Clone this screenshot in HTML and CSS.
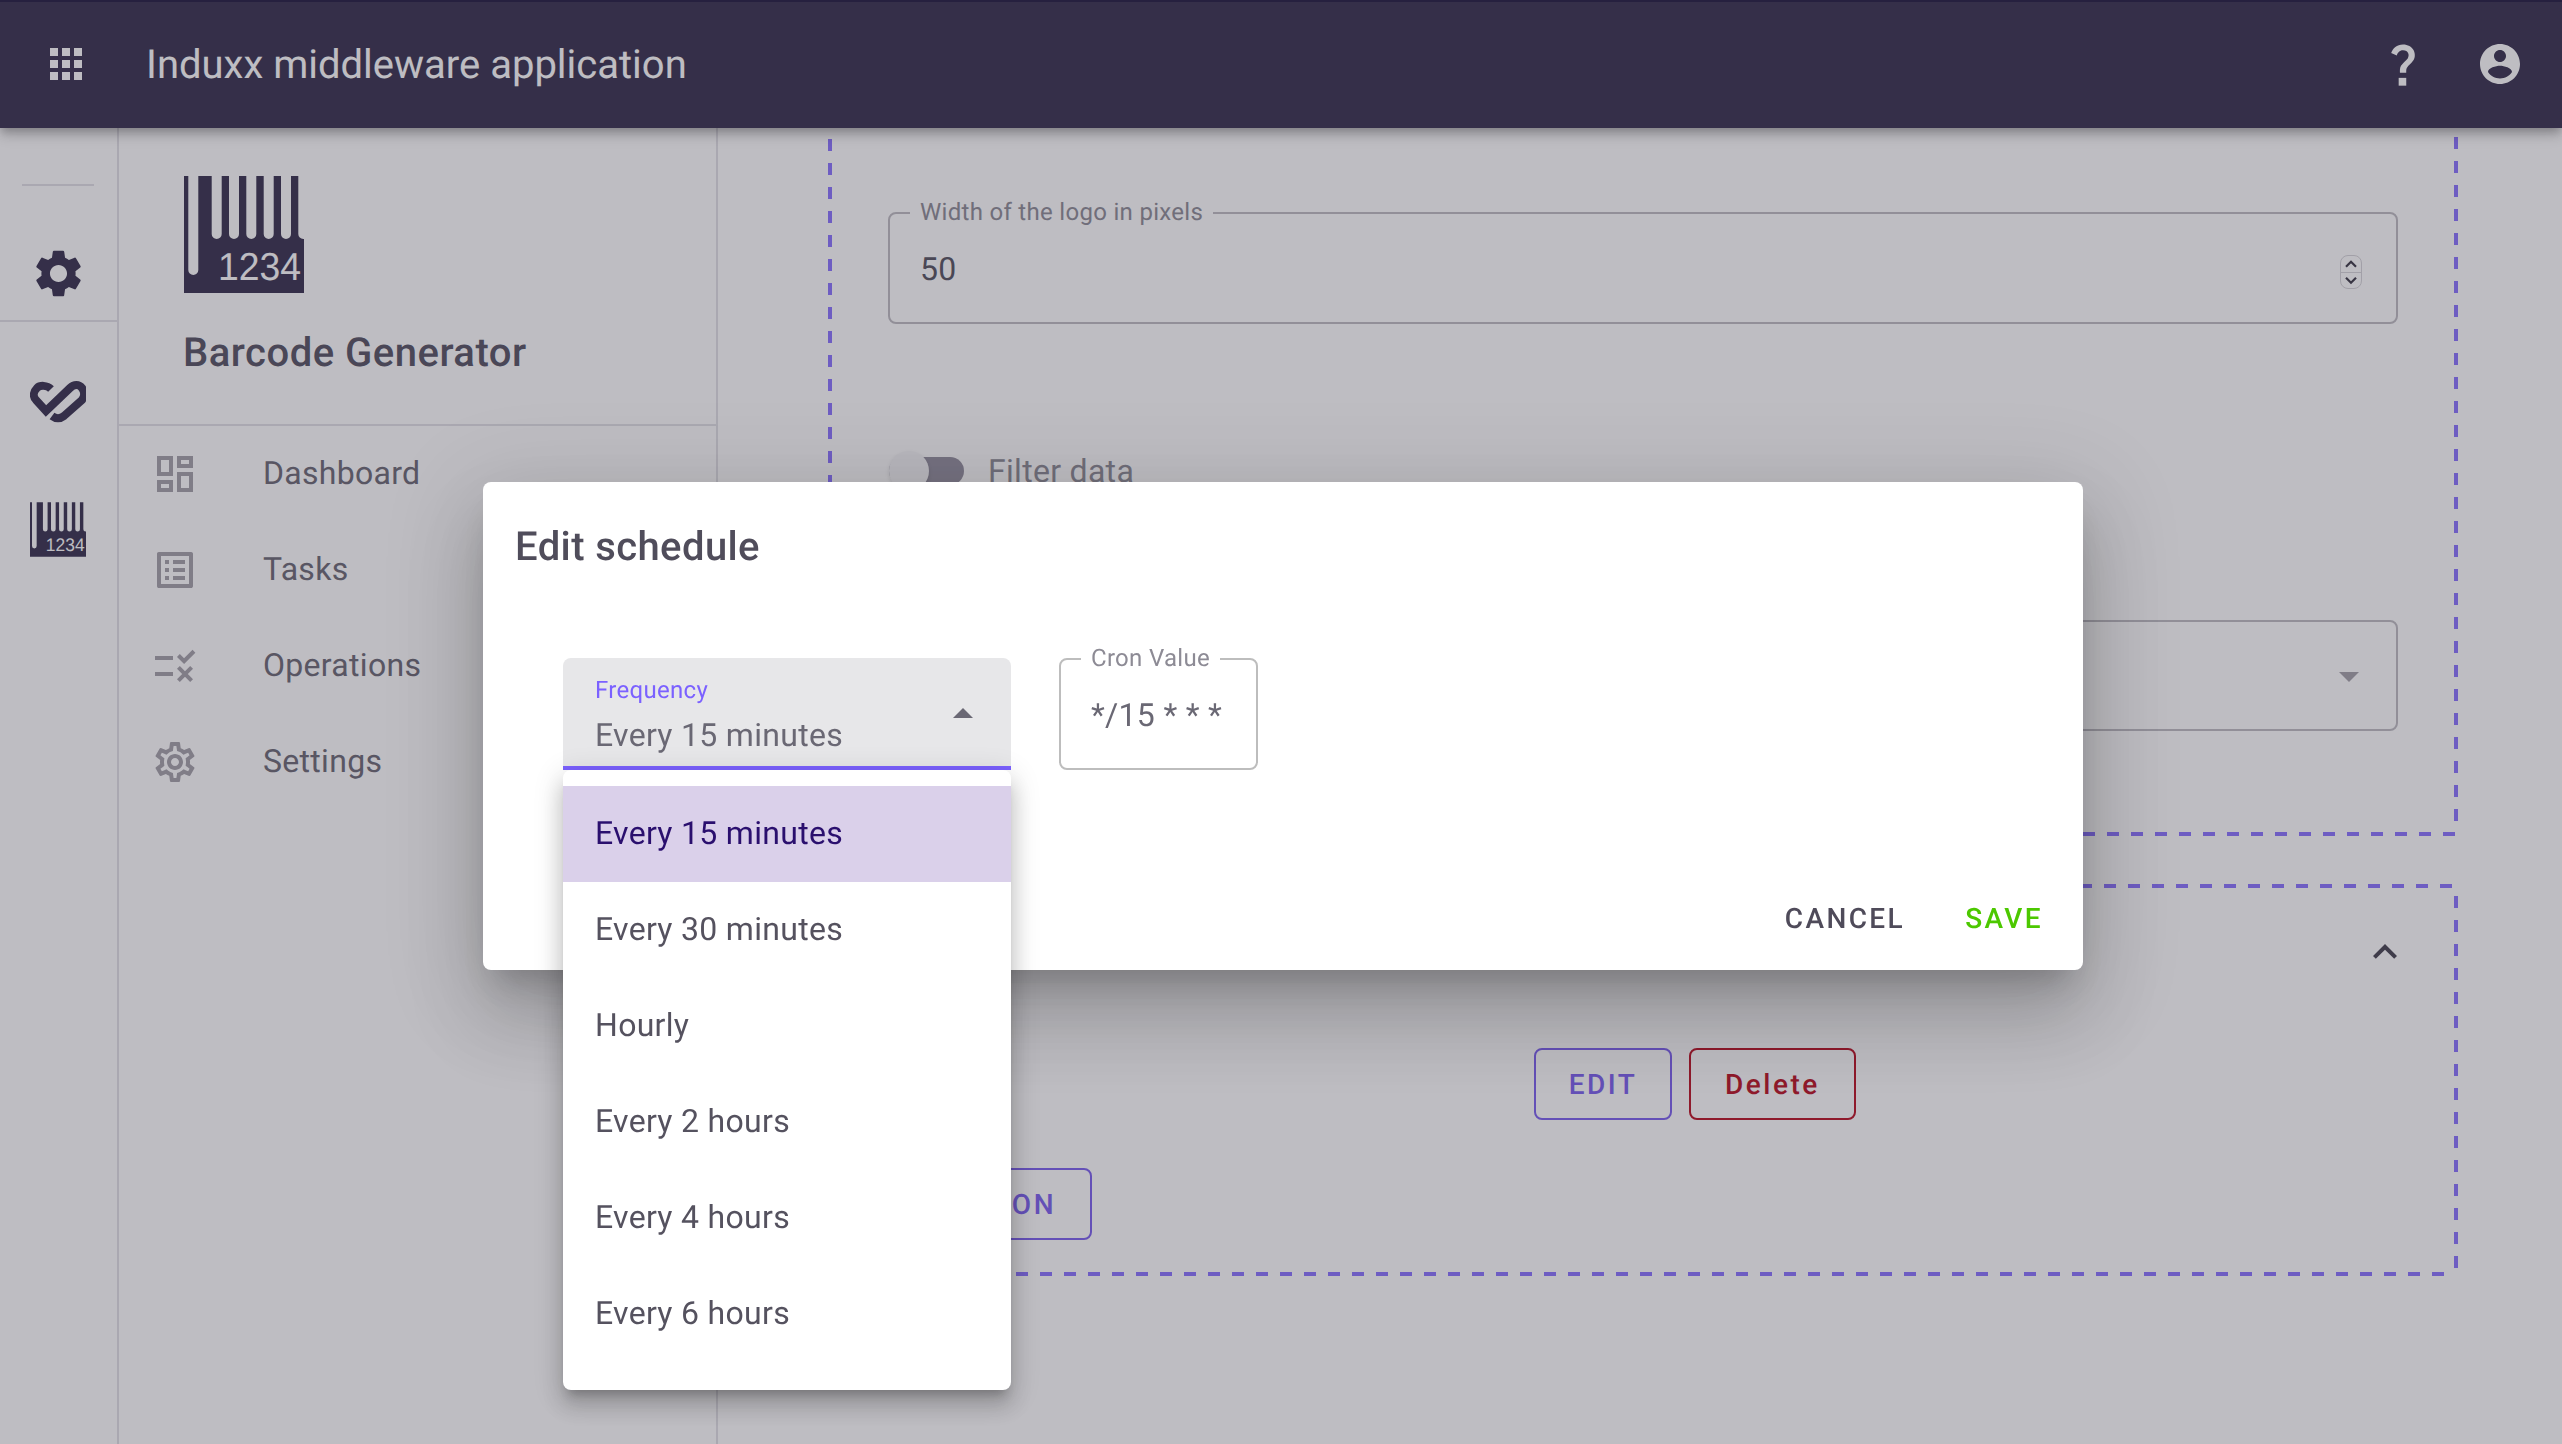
FILE: index.html
```html
<!DOCTYPE html>
<html lang="en">
<head>
<meta charset="utf-8">
<title>Induxx middleware application</title>
<link rel="stylesheet" href="styles.css">
</head>
<body>
<div class="app">
  <header class="appbar">
    <svg class="icon-48" viewBox="0 0 24 24"><path d="M4 8h4V4H4v4zm6 12h4v-4h-4v4zm-6 0h4v-4H4v4zm0-6h4v-4H4v4zm6 0h4v-4h-4v4zm6-10v4h4V4h-4zm-6 4h4V4h-4v4zm6 6h4v-4h-4v4zm0 6h4v-4h-4v4z"/></svg>
    <div class="app-title">Induxx middleware application</div>
    <svg class="icon-help" viewBox="0 0 24 24"><path d="M11.07 12.85c.77-1.39 2.25-2.21 3.11-3.44.91-1.29.4-3.7-2.18-3.7-1.69 0-2.52 1.28-2.87 2.34L6.54 6.96C7.25 4.83 9.18 3 11.99 3c2.35 0 3.96 1.07 4.78 2.41.7 1.15 1.11 3.3.03 4.9-1.2 1.77-2.35 2.31-2.97 3.45-.25.46-.35.76-.35 2.24h-2.89c-.01-.78-.13-2.05.48-3.15z"/><path d="M10 18.4h3.5V22H10z"/></svg>
    <svg class="icon-48 icon-account" viewBox="0 0 24 24"><path d="M12 2C6.48 2 2 6.48 2 12s4.48 10 10 10 10-4.48 10-10S17.52 2 12 2zm0 3c1.66 0 3 1.34 3 3s-1.34 3-3 3-3-1.34-3-3 1.34-3 3-3zm0 14.2c-2.5 0-4.71-1.28-6-3.22.03-1.99 4-3.08 6-3.08 1.99 0 5.97 1.09 6 3.08-1.29 1.94-3.5 3.22-6 3.22z"/></svg>
  </header>
  <div class="workspace">
    <nav class="rail">
      <div class="rail-rule-short"></div>
      <svg class="rail-gear" viewBox="0 0 24 24"><path d="M19.14 12.94c.04-.3.06-.61.06-.94 0-.32-.02-.64-.07-.94l2.03-1.58c.18-.14.23-.41.12-.61l-1.92-3.32c-.12-.22-.37-.29-.59-.22l-2.39.96c-.5-.38-1.03-.7-1.62-.94l-.36-2.54c-.04-.24-.24-.41-.48-.41h-3.84c-.24 0-.43.17-.47.41l-.36 2.54c-.59.24-1.13.57-1.62.94l-2.39-.96c-.22-.08-.47 0-.59.22L2.74 8.87c-.12.21-.08.47.12.61l2.03 1.58c-.05.3-.09.63-.09.94s.02.64.07.94l-2.03 1.58c-.18.14-.23.41-.12.61l1.92 3.32c.12.22.37.29.59.22l2.39-.96c.5.38 1.03.7 1.62.94l.36 2.54c.05.24.24.41.48.41h3.84c.24 0 .44-.17.47-.41l.36-2.54c.59-.24 1.13-.56 1.62-.94l2.39.96c.22.08.47 0 .59-.22l1.92-3.32c.12-.22.07-.47-.12-.61l-2.01-1.58zM12 15.6c-1.98 0-3.6-1.62-3.6-3.6s1.62-3.6 3.6-3.6 3.6 1.62 3.6 3.6-1.62 3.6-3.6 3.6z"/></svg>
      <div class="rail-rule"></div>
      <svg class="rail-heart" viewBox="10 22 56 42"><path d="M31 30C27 26 20 26 17 29C13 33 13 38 16 41L26 52L50 29C54 25 59 25 62 29C65 33 65 37 62 41L44 57C40 60 36 60 32 57"/></svg>
      <svg class="rail-barcode" viewBox="0 0 120 117">
        <path d="M0 0H4.3V94A5 5 0 0 0 14.3 94V0H27.7V58A5 5 0 0 0 37.7 58V0H45V58A5 5 0 0 0 55 58V0H62.3V58A5 5 0 0 0 72.3 58V0H79.7V58A5 5 0 0 0 89.7 58V0H97V58A5 5 0 0 0 107 58V0H114.3V58A5 5 0 0 0 119.3 63H120V117H0Z"/>
        <text class="barcode-digits" x="34" y="104" textLength="83" lengthAdjust="spacingAndGlyphs">1234</text>
      </svg>
    </nav>
    <aside class="panel">
      <div class="panel-head">
        <svg class="panel-logo" viewBox="0 0 120 117">
          <path d="M0 0H4.3V94A5 5 0 0 0 14.3 94V0H27.7V58A5 5 0 0 0 37.7 58V0H45V58A5 5 0 0 0 55 58V0H62.3V58A5 5 0 0 0 72.3 58V0H79.7V58A5 5 0 0 0 89.7 58V0H97V58A5 5 0 0 0 107 58V0H114.3V58A5 5 0 0 0 119.3 63H120V117H0Z"/>
          <text class="barcode-digits" x="34" y="104" textLength="83" lengthAdjust="spacingAndGlyphs">1234</text>
        </svg>
        <div class="panel-name">Barcode Generator</div>
      </div>
      <ul class="nav-list">
        <li class="nav-row"><svg class="icon-48" viewBox="0 0 24 24"><path d="M19 5v2h-4V5h4M9 5v6H5V5h4m10 8v6h-4v-6h4M9 17v2H5v-2h4M21 3h-8v6h8V3zM11 3H3v10h8V3zm10 8h-8v10h8V11zm-10 4H3v6h8v-6z"/></svg><span>Dashboard</span></li>
        <li class="nav-row"><svg class="icon-48" viewBox="0 0 24 24"><path d="M11 7h6v2h-6zm0 4h6v2h-6zm0 4h6v2h-6zM7 7h2v2H7zm0 4h2v2H7zm0 4h2v2H7zM20.1 3H3.9c-.5 0-.9.4-.9.9v16.2c0 .4.4.9.9.9h16.2c.4 0 .9-.5.9-.9V3.9c0-.5-.5-.9-.9-.9zM19 19H5V5h14v14z"/></svg><span>Tasks</span></li>
        <li class="nav-row"><svg class="icon-48" viewBox="0 0 24 24"><path d="M16.54 11 13 7.46l1.41-1.41 2.12 2.12 4.24-4.24 1.41 1.41L16.54 11zM11 7H2v2h9V7zm10 6.41L19.59 12 17 14.59 14.41 12 13 13.41 15.59 16 13 18.59 14.41 20 17 17.41 19.59 20 21 18.59 18.41 16 21 13.41zM11 15H2v2h9v-2z"/></svg><span>Operations</span></li>
        <li class="nav-row"><svg class="icon-48" viewBox="0 0 24 24"><path d="M19.43 12.98c.04-.32.07-.64.07-.98 0-.34-.03-.66-.07-.98l2.11-1.65c.19-.15.24-.42.12-.64l-2-3.46c-.09-.16-.26-.25-.44-.25-.06 0-.12.01-.17.03l-2.49 1c-.52-.4-1.08-.73-1.69-.98l-.38-2.65C14.46 2.18 14.25 2 14 2h-4c-.25 0-.46.18-.49.42l-.38 2.65c-.61.25-1.17.59-1.69.98l-2.49-1c-.06-.02-.12-.03-.18-.03-.17 0-.34.09-.43.25l-2 3.46c-.13.22-.07.49.12.64l2.11 1.65c-.04.32-.07.65-.07.98 0 .33.03.66.07.98l-2.11 1.65c-.19.15-.24.42-.12.64l2 3.46c.09.16.26.25.44.25.06 0 .12-.01.17-.03l2.49-1c.52.4 1.08.73 1.69.98l.38 2.65c.03.24.24.42.49.42h4c.25 0 .46-.18.49-.42l.38-2.65c.61-.25 1.17-.59 1.69-.98l2.49 1c.06.02.12.03.18.03.17 0 .34-.09.43-.25l2-3.46c.12-.22.07-.49-.12-.64l-2.11-1.65zm-1.98-1.71c.04.31.05.52.05.73 0 .21-.02.43-.05.73l-.14 1.13.89.7 1.08.84-.7 1.21-1.27-.51-1.04-.42-.9.68c-.43.32-.84.56-1.25.73l-1.06.43-.16 1.13-.2 1.35h-1.4l-.19-1.35-.16-1.13-1.06-.43c-.43-.18-.83-.41-1.23-.71l-.91-.7-1.06.43-1.27.51-.7-1.21 1.08-.84.89-.7-.14-1.13c-.03-.31-.05-.54-.05-.74s.02-.43.05-.73l.14-1.13-.89-.7-1.08-.84.7-1.21 1.27.51 1.04.42.9-.68c.43-.32.84-.56 1.25-.73l1.06-.43.16-1.13.2-1.35h1.39l.19 1.35.16 1.13 1.06.43c.43.18.83.41 1.23.71l.91.7 1.06-.43 1.27-.51.7 1.21-1.07.85-.89.7.14 1.13zM12 8c-2.21 0-4 1.79-4 4s1.79 4 4 4 4-1.79 4-4-1.79-4-4-4zm0 6c-1.1 0-2-.9-2-2s.9-2 2-2 2 .9 2 2-.9 2-2 2z"/></svg><span>Settings</span></li>
      </ul>
    </aside>
    <main class="main">
      <section class="dash-box dash-box-form">
        <fieldset class="field">
          <legend class="field-label">Width of the logo in pixels</legend>
          <div class="field-value">
            <span>50</span>
            <span class="spinner">
              <svg class="spinner-half" viewBox="0 0 22 16"><path d="M5.5 11 11 5.5 16.5 11"/></svg>
              <svg class="spinner-half" viewBox="0 0 22 16"><path d="M5.5 5 11 10.5 16.5 5"/></svg>
            </span>
          </div>
        </fieldset>
        <div class="toggle-row">
          <span class="toggle"><span class="toggle-thumb"></span></span>
          <span class="toggle-label">Filter data</span>
        </div>
        <div class="select-outlined">
          <svg class="icon-48" viewBox="0 0 24 24"><path d="M7 10l5 5 5-5z"/></svg>
        </div>
      </section>
      <section class="dash-box dash-box-schedule">
        <div class="accordion-head">
          <span class="accordion-title">Scheduling</span>
          <svg class="icon-48" viewBox="0 0 24 24"><path d="M12 8l-6 6 1.41 1.41L12 10.83l4.59 4.58L18 14z"/></svg>
        </div>
        <div class="button-row">
          <button class="btn btn-primary btn-edit">EDIT</button>
          <button class="btn btn-danger">Delete</button>
        </div>
        <button class="btn btn-primary btn-action">ACTION</button>
      </section>
    </main>
  </div>
</div>

<div class="modal">
  <div class="dialog">
    <h2 class="dialog-title">Edit schedule</h2>
    <div class="dialog-row">
      <div class="select-filled">
        <div class="select-text">
          <div class="select-label">Frequency</div>
          <div class="select-value">Every 15 minutes</div>
        </div>
        <svg class="icon-48 select-arrow" viewBox="0 0 24 24"><path d="M7 14l5-5 5 5z"/></svg>
      </div>
      <fieldset class="field field-cron">
        <legend class="field-label">Cron Value</legend>
        <div class="field-value"><span>*/15 * * *</span></div>
      </fieldset>
    </div>
    <div class="dialog-actions">
      <button class="text-btn text-btn-cancel">CANCEL</button>
      <button class="text-btn text-btn-save">SAVE</button>
    </div>
  </div>
  <ul class="menu">
    <li class="menu-item menu-item-selected">Every 15 minutes</li>
    <li class="menu-item">Every 30 minutes</li>
    <li class="menu-item">Hourly</li>
    <li class="menu-item">Every 2 hours</li>
    <li class="menu-item">Every 4 hours</li>
    <li class="menu-item">Every 6 hours</li>
  </ul>
</div>
</body>
</html>
```
FILE: styles.css
```css
* { box-sizing: border-box; }
html, body { margin: 0; height: 100%; }
body {
  overflow: hidden;
  background: #fff;
  color: #55525f;
  font-family: Roboto, "Liberation Sans", sans-serif;
  font-size: 32px;
  letter-spacing: 0.3px;
  text-rendering: geometricPrecision;
}
svg { display: block; flex: none; fill: currentColor; }
ul { list-style: none; margin: 0; padding: 0; }
.icon-48 { width: 48px; height: 48px; }

.app { display: flex; flex-direction: column; height: 1444px; }
.appbar {
  position: relative;
  z-index: 2;
  display: flex;
  align-items: center;
  flex: none;
  height: 128px;
  padding: 0 38px 2px 42px;
  border-top: 2px solid #20193f;
  background: #352f4d;
  color: #fff;
  box-shadow: 0 4px 8px -2px rgba(0,0,0,.2), 0 8px 10px rgba(0,0,0,.14), 0 2px 20px rgba(0,0,0,.12);
}
.app-title { margin-left: 56px; font-size: 40px; letter-spacing: 0; flex: 1; }
.icon-help { width: 52px; height: 52px; margin-right: 47px; }

.workspace { display: flex; flex: 1; min-height: 0; }
.rail {
  display: flex;
  flex-direction: column;
  align-items: center;
  flex: none;
  width: 119px;
  padding: 56px 1px 0 0;
  border-right: 2px solid #e2e1e6;
  color: #352f4d;
}
.rail-rule-short { align-self: flex-start; width: 72px; height: 2px; margin-left: 22px; background: #e2e1e6; }
.rail-gear { width: 57px; height: 57px; margin-top: 59px; }
.rail-rule { align-self: stretch; height: 2px; margin: 18px -1px 0 0; background: #e2e1e6; }
.rail-heart { width: 56px; height: 42px; margin-top: 59px; fill: none; stroke: currentColor; stroke-width: 8; }
.rail-barcode { width: 56px; height: 55px; margin-top: 79px; }
.barcode-digits { fill: #fff; font-family: "Liberation Sans", sans-serif; font-size: 39px; letter-spacing: 0; }

.panel { flex: none; width: 599px; border-right: 2px solid #e2e1e6; }
.panel-head { height: 298px; padding: 48px 0 0 65px; border-bottom: 2px solid #e2e1e6; }
.panel-logo { width: 120px; height: 117px; color: #352f4d; }
.panel-name { margin: 36px 0 0 -1px; font-size: 40px; line-height: 48px; font-weight: 500; letter-spacing: 0.5px; color: #545162; }
.nav-list { display: flex; flex-direction: column; }
.nav-row { display: flex; align-items: center; gap: 64px; height: 96px; padding-left: 32px; color: #6a6774; }
.nav-row span { position: relative; top: -1px; }
.nav-row svg { color: #a4a1a9; }

.main { display: flex; flex-direction: column; gap: 48px; flex: 1; min-width: 0; padding: 0 104px 0 110px; }
.dash-box {
  --dash: #8a72ff;
  width: 1630px;
  padding: 0 60px;
  background-repeat: no-repeat;
}
.dash-box-form {
  height: 708px;
  padding-top: 73px;
  background-image:
    repeating-linear-gradient(to bottom, var(--dash) -13px -1px, transparent -1px 11px),
    repeating-linear-gradient(to bottom, var(--dash) -15px -3px, transparent -3px 9px),
    repeating-linear-gradient(to right, var(--dash) 7px 19px, transparent 19px 31px);
  background-size: 4px 100%, 4px calc(100% - 6px), 100% 4px;
  background-position: left top, right top, left bottom;
}
.dash-box-schedule {
  height: 392px;
  padding-top: 44px;
  background-image:
    repeating-linear-gradient(to bottom, var(--dash) 12px 24px, transparent 24px 36px),
    repeating-linear-gradient(to right, var(--dash) 4px 16px, transparent 16px 28px),
    repeating-linear-gradient(to right, var(--dash) -4px 8px, transparent 8px 20px);
  background-size: 4px calc(100% - 6px), calc(100% - 6px) 4px, calc(100% - 6px) 4px;
  background-position: right top, left top, left bottom;
}

.field {
  min-width: 0;
  margin: 0;
  padding: 0 20px;
  border: 2px solid #bebcc2;
  border-radius: 8px;
  height: 123px;
}
.field-label { position: relative; top: -1px; padding: 0 10px; font-size: 24px; line-height: 24px; color: #8d8b95; letter-spacing: 0.3px; }
.field-value {
  display: flex;
  align-items: center;
  justify-content: space-between;
  height: 36px;
  margin-top: 26px;
  padding-left: 10px;
  line-height: 36px;
}
.spinner {
  display: flex;
  flex-direction: column;
  width: 22px;
  height: 34px;
  margin: 5px 14px 0 0;
  border: 1px solid #d6d5d9;
  border-radius: 8px;
  color: #3a3745;
}
.spinner-half { width: 20px; height: 16px; fill: none; stroke: currentColor; stroke-width: 2.4; }
.spinner-half + .spinner-half { border-top: 1px solid #d6d5d9; }

.toggle-row { display: flex; align-items: center; gap: 24px; height: 40px; margin-top: 127px; padding-left: 1px; }
.toggle { position: relative; flex: none; width: 75px; height: 28px; border-radius: 14px; background: #94909f; }
.toggle-thumb {
  position: absolute;
  left: 0;
  top: -6px;
  width: 40px;
  height: 40px;
  border-radius: 50%;
  background: #f6f6f7;
  box-shadow: 0 2px 4px rgba(0,0,0,.12);
}
.toggle-label { color: #8d8b95; }
.select-outlined {
  display: flex;
  align-items: center;
  justify-content: flex-end;
  height: 111px;
  margin-top: 129px;
  padding-right: 23px;
  border: 2px solid #bebcc2;
  border-radius: 8px;
  color: #a4a1a9;
}

.accordion-head { display: flex; align-items: center; justify-content: space-between; height: 48px; margin-right: -11px; padding-left: 20px; }
.accordion-title { color: #55525f; }
.accordion-head svg { color: #45424f; }
.button-row { display: flex; gap: 17px; margin-top: 72px; padding-left: 646px; }
.btn {
  height: 72px;
  padding: 0 34px;
  border: 2px solid currentColor;
  border-radius: 8px;
  background: transparent;
  font-family: inherit;
  font-size: 28px;
  font-weight: 500;
  letter-spacing: 2.5px;
  text-rendering: inherit;
}
.btn-primary { color: #7b5fef; }
.btn-edit { width: 138px; padding: 0; }
.btn-danger { color: #ba0f22; }
.btn-action { display: block; width: 204px; margin-top: 48px; text-align: right; }

.modal {
  position: fixed;
  inset: 0;
  z-index: 10;
  padding: 482px 0 0 483px;
  background: rgba(52,49,65,.32);
}
.dialog {
  display: flex;
  flex-direction: column;
  width: 1600px;
  height: 488px;
  padding: 41px 0 16px;
  border-radius: 8px;
  background: #fff;
  box-shadow: 0 22px 30px -14px rgba(0,0,0,.2), 0 48px 76px 6px rgba(0,0,0,.14), 0 18px 92px 16px rgba(0,0,0,.12);
}
.dialog-title { margin: 0; padding-left: 32px; font-size: 40px; line-height: 48px; font-weight: 500; letter-spacing: 0.4px; color: #504d5b; }
.dialog-row { display: flex; gap: 48px; margin-top: 76px; padding-left: 80px; }
.select-filled {
  display: flex;
  align-items: center;
  justify-content: space-between;
  flex: none;
  width: 448px;
  height: 112px;
  margin-top: 11px;
  padding: 0 24px 0 32px;
  border-bottom: 4px solid #7b61ff;
  border-radius: 8px 8px 0 0;
  background: #e7e7e9;
  color: #6a6874;
}
.select-text { position: relative; top: 3px; }
.select-arrow { position: relative; top: 2px; }
.select-label { font-size: 24px; line-height: 24px; color: #7b61ff; }
.select-value { margin-top: 15px; line-height: 36px; }
.field-cron { width: 199px; border-color: #bdbdbd; }
.field-cron .field-value { color: #6a6874; }
.dialog-actions { display: flex; justify-content: flex-end; gap: 28px; margin-top: auto; padding-right: 24px; }
.text-btn {
  height: 72px;
  padding: 0 16px;
  border: 0;
  background: transparent;
  font-family: inherit;
  font-size: 28px;
  font-weight: 500;
  letter-spacing: 2.4px;
  text-rendering: inherit;
}
.text-btn-cancel { color: #4f4b5a; }
.text-btn-save { color: #4cc800; }

.menu {
  position: absolute;
  left: 563px;
  top: 770px;
  width: 448px;
  height: 620px;
  padding-top: 16px;
  border-radius: 8px;
  background: #fff;
  box-shadow: 0 10px 10px -6px rgba(0,0,0,.2), 0 16px 20px 2px rgba(0,0,0,.14), 0 6px 28px 4px rgba(0,0,0,.12);
}
.menu-item { display: flex; align-items: center; height: 96px; padding: 0 0 2px 32px; color: #55525f; }
.menu-item-selected { background: #dad0ea; color: #2a0f6e; }
```
